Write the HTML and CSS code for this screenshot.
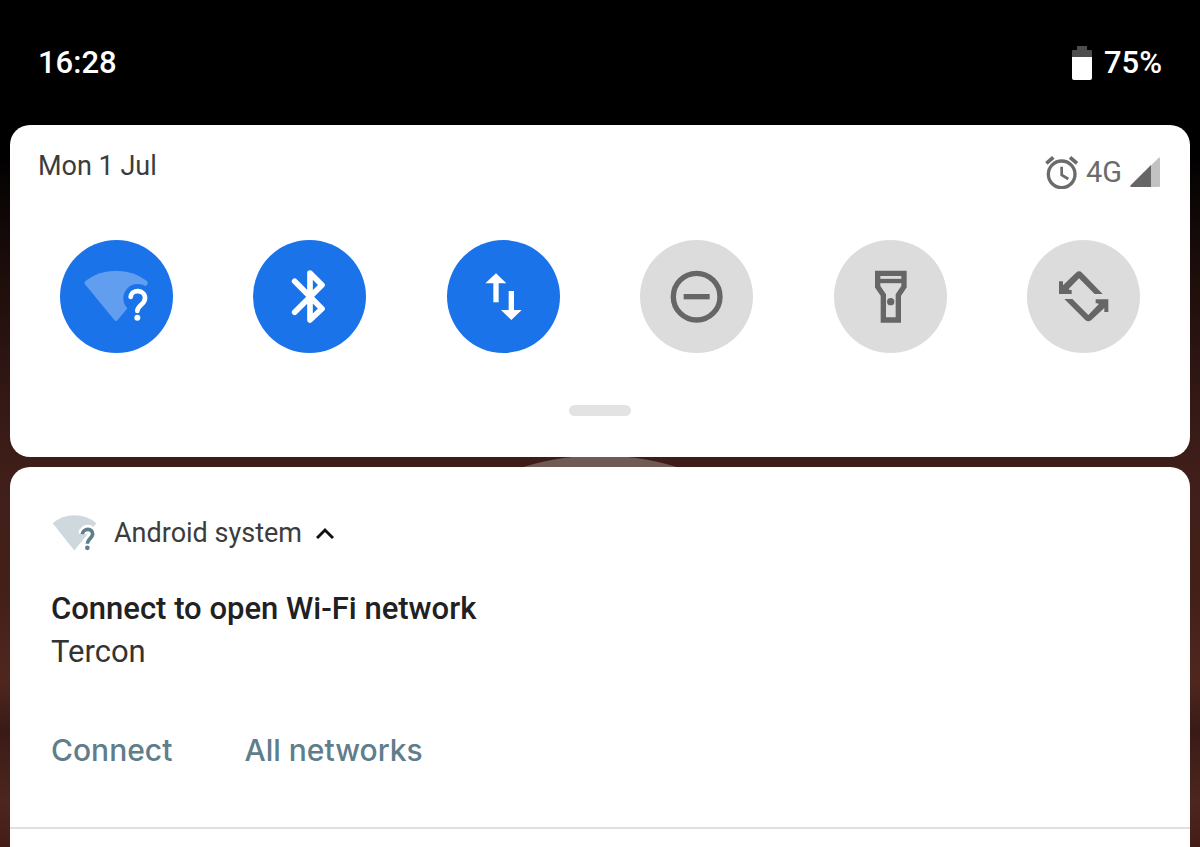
FILE: index.html
```html
<!DOCTYPE html>
<html lang="en">
<head>
<meta charset="utf-8">
<meta name="viewport" content="width=device-width, initial-scale=1">
<title>Notification shade</title>
<link rel="stylesheet" href="styles.css">
</head>
<body class="shade">
<header class="status-bar">
  <time class="clock">16:28</time>
  <div class="battery">
    <svg class="battery-icon" viewBox="0 0 20 34" aria-hidden="true">
      <path fill="#4d4d4d" d="M5 0H15V4H19Q20 4 20 5V12H0V5Q0 4 1 4H5Z"/>
      <path fill="#fff" d="M0 11H20V32Q20 34 18 34H2Q0 34 0 32Z"/>
    </svg>
    <span>75%</span>
  </div>
</header>

<main class="panels">
  <section class="card quick-settings" aria-label="Quick settings">
    <div class="qs-header">
      <span class="date">Mon 1 Jul</span>
      <div class="indicators">
        <svg class="alarm-icon" viewBox="0 0 99 99" fill="none" stroke="#6b6b6b" aria-hidden="true">
          <circle cx="50" cy="55" r="40" stroke-width="10"/>
          <path stroke-width="8" d="M50 32V57L70 69"/>
          <path stroke-width="11" d="M4 22L25 4M75 4L96 22"/>
        </svg>
        <span class="network">4G</span>
        <svg class="signal-icon" viewBox="0 0 90 90" aria-hidden="true">
          <path fill="#c2c2c2" d="M62 26L86 2Q90 0 90 4V86Q90 90 86 90H62Z"/>
          <path fill="#666" d="M63 24V90H4Q-2 89 2 85Z"/>
        </svg>
      </div>
    </div>

    <div class="tiles">
      <button class="tile tile-on" type="button" aria-label="Wi-Fi" aria-pressed="true">
        <svg class="tile-icon" viewBox="0 0 339 339" aria-hidden="true">
          <path fill="#619ef0" d="M75 133Q71 127 77 122Q116 92 168 92Q220 92 260 122Q266 127 262 133L173 240Q168 246 163 240Z"/>
          <circle cx="233" cy="175" r="43" fill="#1a73e8"/>
          <path fill="none" stroke="#fff" stroke-width="14" stroke-linecap="round" d="M212 171C214 146 256 148 255 175C254 194 232 196 232 213"/>
          <circle cx="232" cy="233" r="9" fill="#fff"/>
        </svg>
      </button>
      <button class="tile tile-on" type="button" aria-label="Bluetooth" aria-pressed="true">
        <svg class="tile-icon" viewBox="0 0 339 339" fill="none" stroke="#fff" stroke-width="17" stroke-linecap="round" stroke-linejoin="round" aria-hidden="true">
          <path d="M125 124L207 206L171 240V99L207 135L125 217"/>
        </svg>
      </button>
      <button class="tile tile-on" type="button" aria-label="Mobile data" aria-pressed="true">
        <svg class="tile-icon" viewBox="0 0 339 339" fill="#fff" aria-hidden="true">
          <path d="M147 100L178 130H155V187H139V130H115Z"/>
          <path d="M193 240L162 210H185V153H201V210H224Z"/>
        </svg>
      </button>
      <button class="tile" type="button" aria-label="Do not disturb" aria-pressed="false">
        <svg class="tile-icon" viewBox="0 0 339 339" fill="none" stroke="#666" stroke-width="16" aria-hidden="true">
          <circle cx="170" cy="170" r="70"/>
          <path d="M131 170H209"/>
        </svg>
      </button>
      <button class="tile" type="button" aria-label="Torch" aria-pressed="false">
        <svg class="tile-icon" viewBox="0 0 339 339" fill="none" stroke="#666" stroke-width="16" aria-hidden="true">
          <path d="M131 100H210V140L193 165V240H148V165L131 140Z"/>
          <path stroke-width="13" d="M131 123H210"/>
          <circle cx="170" cy="185" r="11" fill="#666" stroke="none"/>
        </svg>
      </button>
      <button class="tile" type="button" aria-label="Auto-rotate" aria-pressed="false">
        <svg class="tile-icon" viewBox="0 0 339 339" fill="#666" aria-hidden="true">
          <path d="M96 124H108V136L147 98Q156 90 165 98L227 162H203L156 115L125 147L128 150H134V162H96Z"/>
          <path d="M244 216H232V204L193 240Q184 248 175 240L112 177H136L184 225L215 193L212 190H206V178H244Z"/>
        </svg>
      </button>
    </div>

    <div class="handle"></div>
  </section>

  <section class="card notification" aria-label="Android system notification">
    <div class="notification-body">
      <div class="app-row">
        <svg class="app-icon" viewBox="0 0 135 110" aria-hidden="true">
          <path fill="#cfd8dc" d="M2 24Q30 0 67 0Q105 0 133 24L67 106Z"/>
          <path fill="none" stroke="#fff" stroke-width="26" d="M92 56C95 36 122 38 121 58C120 74 106 74 106 94V106"/>
          <path fill="none" stroke="#607d8b" stroke-width="11" d="M91 57C93 38 123 38 122 57C121 71 106 70 106 86"/>
          <circle cx="106" cy="98" r="7" fill="#607d8b"/>
        </svg>
        <span class="app-name">Android system</span>
        <button class="collapse" type="button" aria-label="Collapse">
          <svg class="chevron" viewBox="0 0 18 12" fill="none" stroke="#111" stroke-width="3" aria-hidden="true">
            <path d="M1 11L9 3L17 11"/>
          </svg>
        </button>
      </div>
      <h1 class="title">Connect to open Wi-Fi network</h1>
      <p class="text">Tercon</p>
      <div class="actions">
        <button class="action" type="button">Connect</button>
        <button class="action" type="button">All networks</button>
      </div>
    </div>
  </section>
</main>
</body>
</html>
```

FILE: styles.css
```css
* {
  box-sizing: border-box;
}

.shade {
  margin: 0;
  min-height: 100vh;
  display: flex;
  flex-direction: column;
  font-family: Roboto, "Liberation Sans", sans-serif;
  color: #3c3c3c;
  background:
    radial-gradient(circle at 50% 716px, #6f5a56 260px, transparent 261px),
    linear-gradient(#000 150px, #1c0d0b 270px, #341815 400px, #3f1e19 470px, #44201a 600px, #4f271f 680px, #3a1a16 730px, #4c261f 800px, #451d18 847px);
}

button {
  padding: 0;
  border: 0;
  background: none;
  font: inherit;
  color: inherit;
}

svg {
  display: block;
}

.status-bar {
  display: flex;
  justify-content: space-between;
  align-items: center;
  height: 125px;
  padding: 0 38px;
  background: #000;
  color: #fff;
  font-size: 31px;
  line-height: 40px;
  font-weight: 500;
}

.battery,
.indicators {
  display: flex;
  align-items: center;
}

.battery {
  gap: 12px;
}

.battery-icon {
  width: 20px;
  height: 34px;
}

.panels {
  flex: 1;
  display: flex;
  flex-direction: column;
  gap: 10px;
  padding: 0 10px;
}

.card {
  background: #fff;
  border-radius: 20px;
}

.quick-settings {
  padding: 25px 28px 41px;
}

.qs-header {
  display: flex;
  justify-content: space-between;
  align-items: flex-start;
}

.date,
.app-name {
  font-size: 27px;
  line-height: 32px;
}

.indicators {
  gap: 8px;
  padding: 4px 2px 0 0;
}

.alarm-icon {
  width: 33px;
  height: 33px;
}

.network {
  font-size: 29px;
  line-height: 36px;
  color: #6b6b6b;
}

.signal-icon {
  width: 30px;
  height: 30px;
}

.tiles {
  display: flex;
  justify-content: space-between;
  padding: 50px 22px 52px;
}

.tile {
  width: 113px;
  height: 113px;
  border-radius: 50%;
  background: #dcdcdc;
}

.tile-on {
  background: #1a73e8;
}

.tile-icon {
  width: 100%;
  height: 100%;
}

.handle {
  width: 62px;
  height: 11px;
  margin: 0 auto;
  border-radius: 6px;
  background: #e3e3e3;
}

.notification {
  flex: 1;
  border-radius: 20px 20px 0 0;
}

.notification-body {
  padding: 46px 41px 57px;
  border-bottom: 2px solid #e0e0e0;
}

.app-row {
  display: flex;
  align-items: center;
  height: 40px;
}

.app-icon {
  width: 45px;
  height: 37px;
  margin: 0 17px 0 1px;
}

.collapse {
  padding: 8px;
  margin-left: 6px;
}

.chevron {
  width: 18px;
  height: 12px;
}

.title,
.text {
  margin: 0;
  font-size: 31px;
  color: #212121;
}

.title {
  margin-top: 36px;
  line-height: 40px;
  font-weight: 500;
}

.text {
  line-height: 46px;
  color: #333;
}

.actions {
  display: flex;
  gap: 72px;
  margin-top: 55px;
}

.action {
  font-family: Inter, Roboto, sans-serif;
  font-size: 30px;
  line-height: 40px;
  font-weight: 500;
  color: #607d8b;
}
```
